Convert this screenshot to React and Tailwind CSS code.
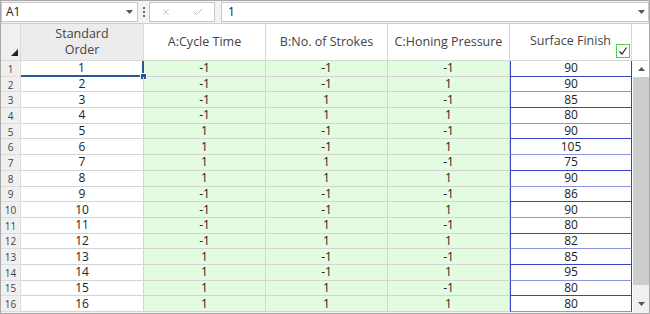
import { Check, X } from "lucide-react";

const A = [-1, -1, -1, -1, 1, 1, 1, 1, -1, -1, -1, -1, 1, 1, 1, 1];
const B = [-1, -1, 1, 1, -1, -1, 1, 1, -1, -1, 1, 1, -1, -1, 1, 1];
const C = [-1, 1, -1, 1, -1, 1, -1, 1, -1, 1, -1, 1, -1, 1, -1, 1];
const SF = [90, 90, 85, 80, 90, 105, 75, 90, 86, 90, 80, 82, 85, 95, 80, 80];

const Caret = ({ className = "" }) => (
    <svg width="7" height="4" viewBox="0 0 7 4" className={className}>
        <path d="M0 0h7L3.5 4z" fill="#555" />
    </svg>
);

const App = () => {
    return (
        <div
            className="w-[650px] h-[314px] bg-[#f3f3f3] border border-[#a8a8a8] text-[12px] text-[#222] overflow-hidden"
            style={{ fontFamily: '"Open Sans", "Noto Sans", sans-serif' }}
        >
            {/* formula bar */}
            <div className="flex items-center h-[21px] gap-[1px]">
                <div className="flex items-center justify-between w-[137px] h-[20px] bg-white border border-[#c8c8c8] pl-[4px] pr-[4px]">
                    <span>A1</span>
                    <Caret />
                </div>
                <div className="flex flex-col items-center justify-center gap-[2px] w-[9px] h-[20px]">
                    <span className="w-[2px] h-[2px] bg-[#666]" />
                    <span className="w-[2px] h-[2px] bg-[#666]" />
                    <span className="w-[2px] h-[2px] bg-[#666]" />
                </div>
                <div className="flex items-center justify-around w-[66px] h-[20px] bg-white border border-[#c8c8c8]">
                    <X size={10} color="#aaa" strokeWidth={1.5} />
                    <Check size={12} color="#aaa" strokeWidth={1.5} />
                </div>
                <div className="w-[4px]" />
                <div className="flex items-center justify-between flex-1 h-[20px] bg-white border border-[#c8c8c8] pl-[6px] pr-[3px]">
                    <span>1</span>
                    <Caret />
                </div>
            </div>

            {/* header row */}
            <div className="flex h-[38px] mt-[1px] bg-white border-t border-[#cfcfcf]">
                <div className="relative w-[20px] bg-[#f0f0f0] border-r border-b border-[#d8d8d8]">
                    <svg width="7" height="7" viewBox="0 0 7 7" className="absolute right-[2px] bottom-[4px]">
                        <path d="M7 0V7H0z" fill="#222" />
                    </svg>
                </div>
                <div className="flex items-center justify-center w-[123px] bg-[#ececec] border-r border-b border-[#d8d8d8] text-[12.5px] text-[#444] leading-[16px] text-center">
                    Standard
                    <br />
                    Order
                </div>
                {["A:Cycle Time", "B:No. of Strokes", "C:Honing Pressure"].map((h) => (
                    <div
                        key={h}
                        className="flex items-center justify-center w-[122px] border-r border-b border-[#d8d8d8] text-[12.5px] text-[#444]"
                    >
                        {h}
                    </div>
                ))}
                <div className="relative flex items-center justify-center w-[122px] border-r border-b border-[#d8d8d8] text-[12.5px] text-[#444] pb-[2px]">
                    Surface Finish
                    <div className="absolute right-[1px] bottom-[2px] flex items-center justify-center w-[14px] h-[14px] border border-[#4cd24c] bg-white">
                        <svg width="10" height="10" viewBox="0 0 10 10">
                            <path d="M1.5 5.5L4 8L8.5 1.5" fill="none" stroke="#222" strokeWidth="1.2" />
                        </svg>
                    </div>
                </div>
                <div className="w-[16px] border-b border-[#d8d8d8]" />
            </div>

            {/* body */}
            <div className="flex bg-white">
                <div className="flex flex-col w-[632px]">
                    {SF.map((sf, i) => (
                        <div key={i} className="flex h-[15.7px] leading-[12px]">
                            <div className="flex items-center justify-center w-[20px] bg-[#f0f0f0] border-r border-b border-[#dcdcdc] text-[10px] text-[#444] pt-[1px]">
                                {i + 1}
                            </div>
                            <div
                                className={`relative flex items-center justify-center w-[123px] border-[#d4d4d4] ${
                                    i === 0 ? "border-r-2 border-b-2 border-r-[#2b579a] border-b-[#2b579a]" : "border-r border-b"
                                }`}
                            >
                                {i + 1}
                                {i === 0 && (
                                    <span className="absolute right-[-5px] bottom-[-5px] w-[7px] h-[7px] bg-[#2b579a] border border-white" />
                                )}
                            </div>
                            {[A[i], B[i], C[i]].map((v, j) => (
                                <div
                                    key={j}
                                    className="flex items-center justify-center w-[122px] bg-[#e3fbe0] border-r border-b border-[#d4d4d4]"
                                >
                                    {v}
                                </div>
                            ))}
                            <div
                                className={`flex items-center justify-center w-[122px] border-l border-r border-b border-[#3545c0] ${
                                    i % 2 === 1 ? "border-b-[#8c95dc]" : ""
                                }`}
                            >
                                {sf}
                            </div>
                        </div>
                    ))}
                </div>
                <div className="flex flex-col w-[16px] h-[251px] bg-[#f0f0f0]">
                    <div className="flex items-center justify-center h-[16px] bg-white">
                        <svg width="7" height="4" viewBox="0 0 7 4">
                            <path d="M0 4h7L3.5 0z" fill="#555" />
                        </svg>
                    </div>
                    <div className="h-[208px] bg-[#cdcdcd]" />
                    <div className="flex-1" />
                    <div className="flex items-center justify-center h-[16px]">
                        <Caret />
                    </div>
                </div>
            </div>
        </div>
    );
};

export default App;
